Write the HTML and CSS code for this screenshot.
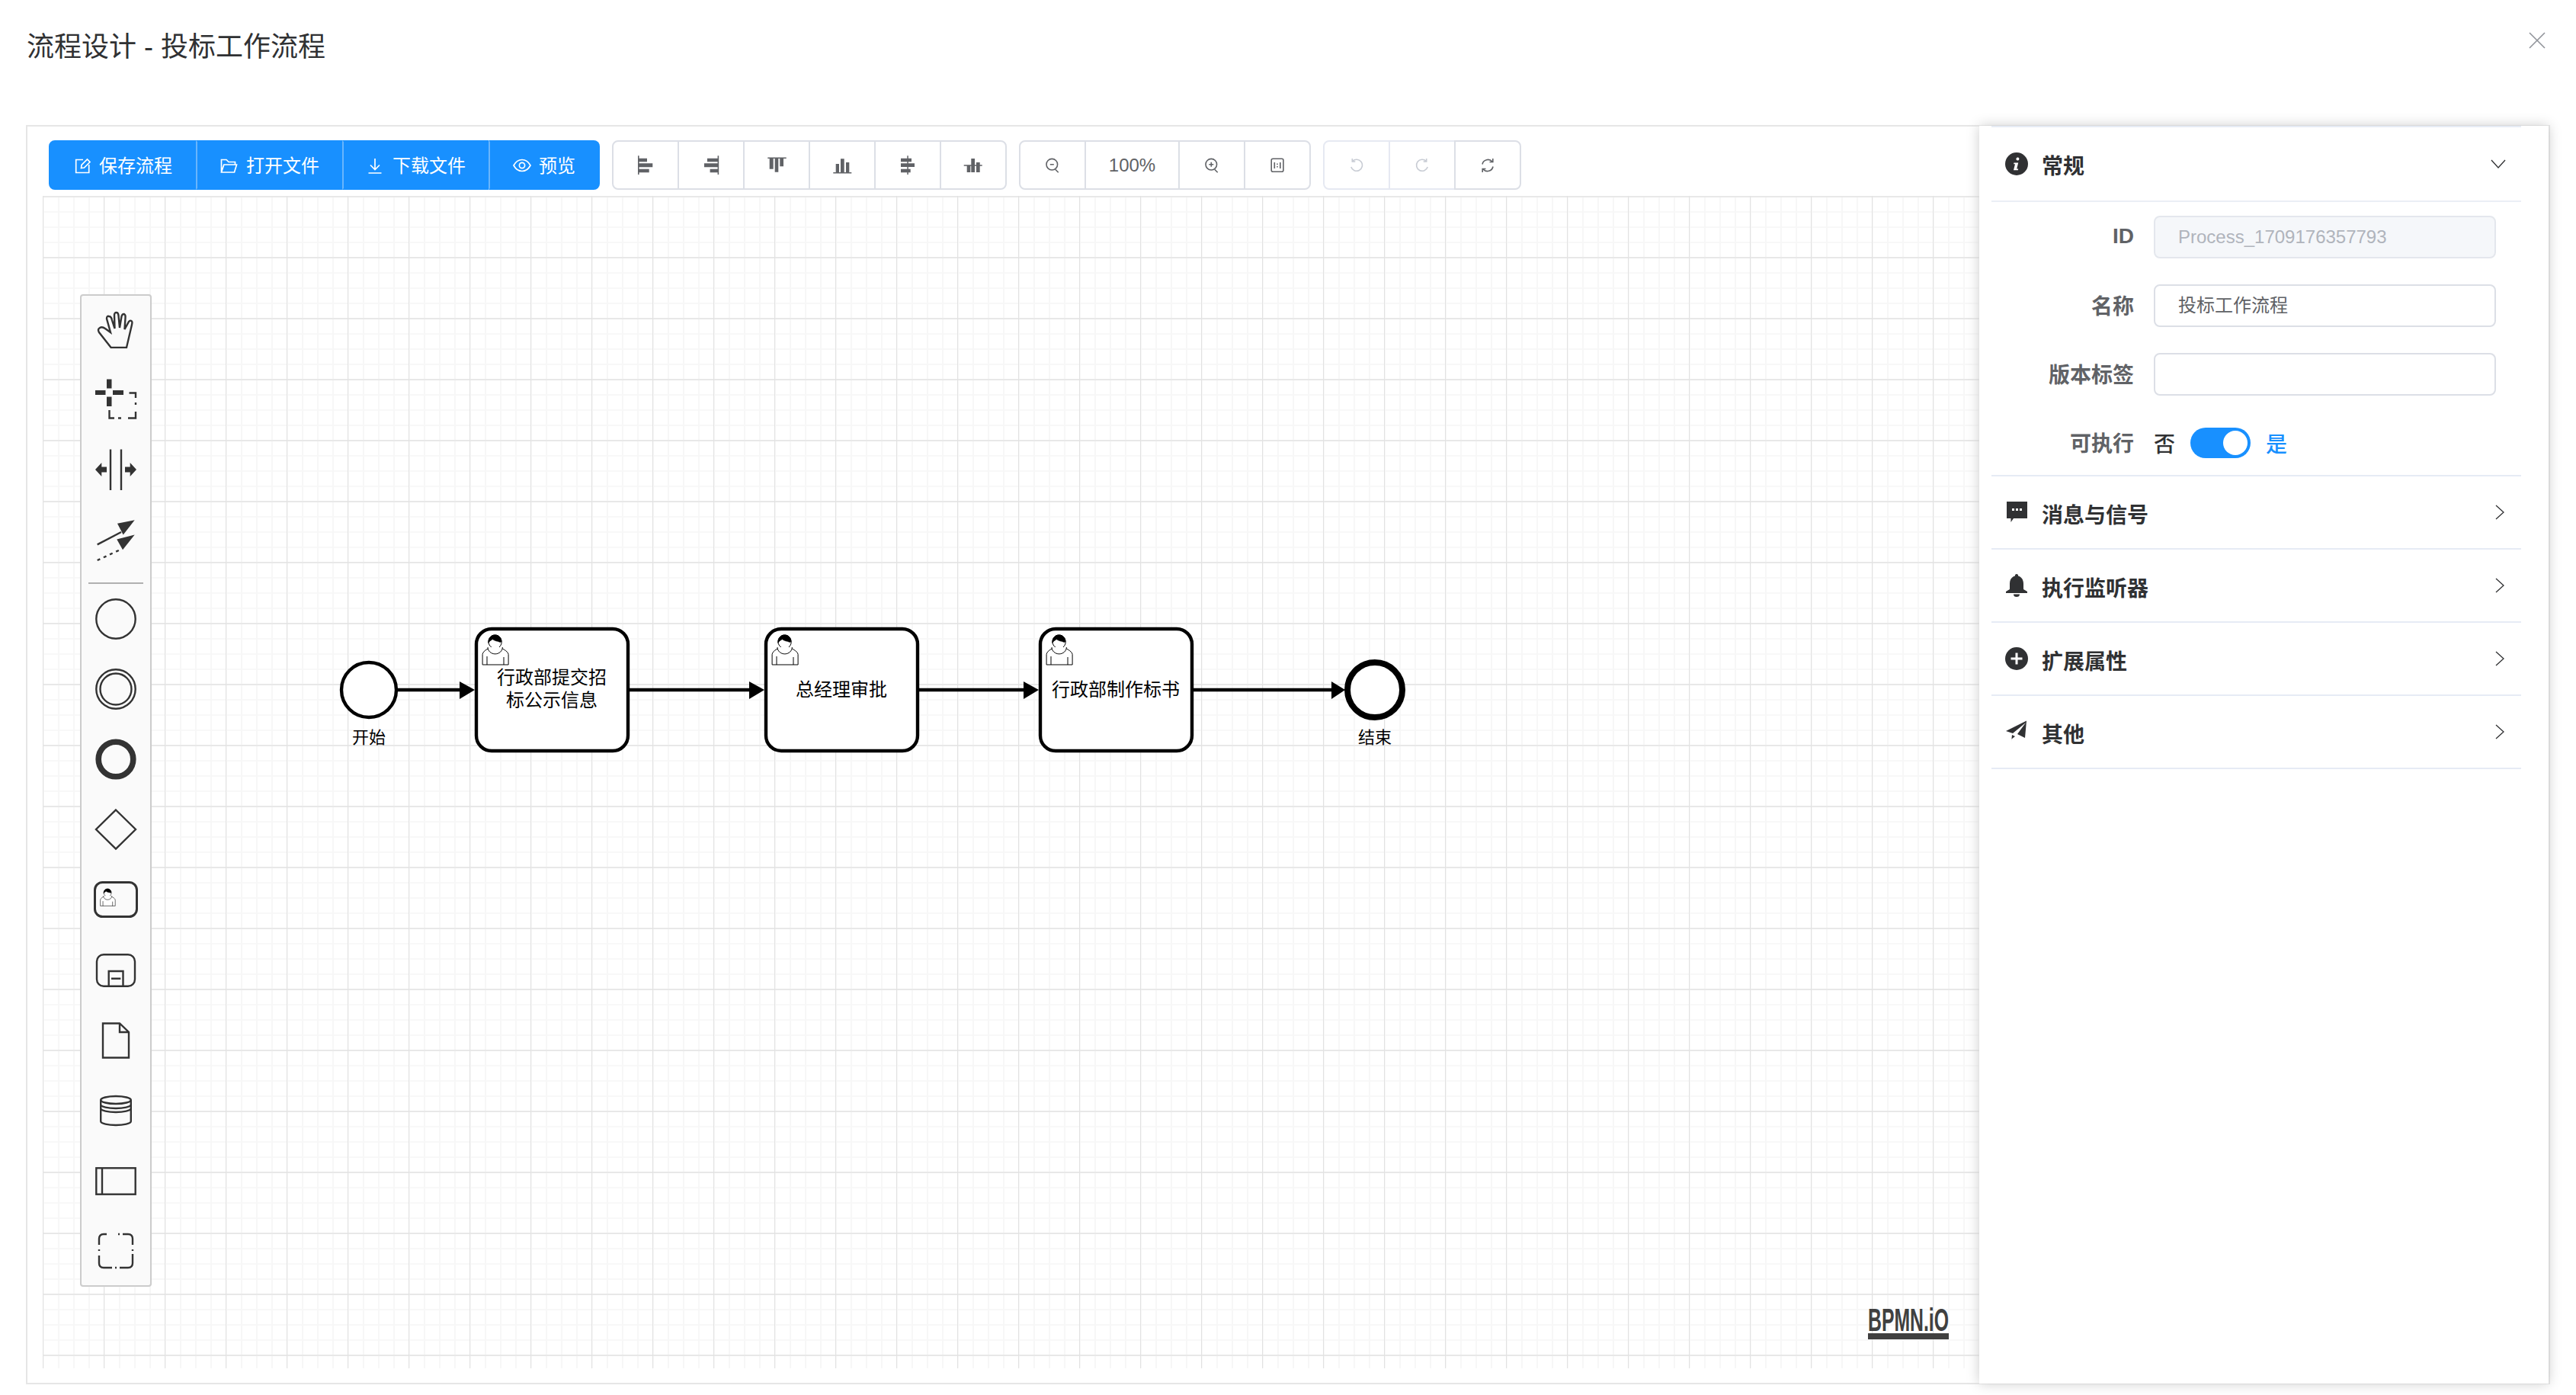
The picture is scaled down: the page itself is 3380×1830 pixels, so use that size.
FILE: index.html
```html
<!DOCTYPE html>
<html lang="zh-CN">
<head>
  <meta charset="UTF-8">
  <title>流程设计 - 投标工作流程</title>
  <meta name="viewport" content="width=device-width, initial-scale=1.0">
  <link rel="stylesheet" href="styles.css">
</head>
<body>
  <svg class="defs" width="0" height="0">
    <defs>
      <symbol id="user" viewBox="0 0 25 28" overflow="visible">
        <path class="user-body" d="m15 12 c0.909,-0.845 1.594,-2.049 1.594,-3.385 0,-2.554 -1.805,-4.622 -4.357,-4.622 -2.552,0 -4.288,2.068 -4.288,4.622 0,1.348 0.974,2.562 1.896,3.405 -0.529,0.187 -5.669,2.097 -5.794,4.756 v6.718 h17 v-6.718 c0,-2.298 -5.528,-4.595 -6.051,-4.776 z m-8 6 l0,5.5 m11,0 l0,-5"/>
        <path class="user-body" d="m15 12 m2.162,1.009 c0,2.447 -2.158,4.431 -4.821,4.431 -2.665,0 -4.822,-1.981 -4.822,-4.431" transform="translate(0 -1)"/>
        <path class="user-hair" d="m15 12 m-0.7,-3.8 c0,0 -2.4,-0.4 -3.6,-1.4 -1,0.6 -2.6,1.6 -2.7,2.4 -0.3,-2.5 1.2,-5.2 4.3,-5.2 2.6,0 4.2,2 4.1,4.4 -0.1,0.5 -1.1,0.2 -2.1,-0.2 z"/>
      </symbol>
    </defs>
  </svg>

  <header class="dialog-head">
    <span class="dialog-title">流程设计 - 投标工作流程</span>
    <svg class="dialog-close" viewBox="0 0 22 22"><path d="M1 1L21 21M21 1L1 21"/></svg>
  </header>

  <main class="designer">
    <div class="toolbar">
      <div class="btn-group group-primary">
        <button class="tb-btn primary">
          <svg class="ico" viewBox="0 0 24 24"><path d="M13 4.5H3.7V21.5H20.7V11M10.5 15.5L11 11.5L18.5 4L22 7.5L14.5 15Z"/></svg>保存流程
        </button>
        <button class="tb-btn primary">
          <svg class="ico" viewBox="0 0 24 24"><path d="M1.5 21V4.5H8L11 7.5H19.5V11M1.5 21H18.5L21.5 11H4.8Z"/></svg>打开文件
        </button>
        <button class="tb-btn primary">
          <svg class="ico" viewBox="0 0 24 24"><path d="M11 3V17M5 11.5L11 17.5L17 11.5M2.5 22H19.5"/></svg>下载文件
        </button>
        <button class="tb-btn primary">
          <svg class="ico" viewBox="0 0 24 24"><path d="M1 12C4 6.5 8 4.5 12 4.5S20 6.5 23 12C20 17.5 16 19.5 12 19.5S4 17.5 1 12Z"/><circle cx="12" cy="12" r="3.6"/></svg>预览
        </button>
      </div>

      <div class="btn-group">
        <button class="tb-btn square"><svg class="ico-s" viewBox="0 0 32 32"><path class="solid" d="M6 3.3h1.6V28H6zM7.6 6.7H18v4.6H7.6zM7.6 13.3H25.3v5H7.6zM7.6 20.7H20.7v4.6H7.6z"/></svg></button>
        <button class="tb-btn square"><svg class="ico-s" viewBox="0 0 32 32"><path class="solid" d="M24.6 3.3h1.6V28h-1.6zM11 6.7H24.6v4.6H11zM7 13.3H24.6v5H7zM14.6 20.7H24.6v4.6H14.6z"/></svg></button>
        <button class="tb-btn square"><svg class="ico-s" viewBox="0 0 32 32"><path class="solid" d="M4.3 5.4H28.7V7H4.3zM6.7 7h5v13.7h-5zM13.7 7h4.6v17.7h-4.6zM20.3 7H25v10.3h-4.7z"/></svg></button>
        <button class="tb-btn square"><svg class="ico-s" viewBox="0 0 32 32"><path class="solid" d="M4.3 25H28.3v1.6H4.3zM7.7 14H12V25H7.7zM14 7.3h4.7V25H14zM21 12h4.3V25H21z"/></svg></button>
        <button class="tb-btn square"><svg class="ico-s" viewBox="0 0 32 32"><path class="solid" d="M15.3 3.3h1.5V28h-1.5zM7 6.7H21v4.6H7zM7 13.3H25v4.7H7zM7 20.7H19.7v4.6H7z"/></svg></button>
        <button class="tb-btn square"><svg class="ico-s" viewBox="0 0 32 32"><path class="solid" d="M3.7 15.3H27.7v1.5H3.7zM7.7 16.8h4.6V25H7.7zM13.3 7H18V25H13.3zM20 12h4.7V25H20z"/></svg></button>
      </div>

      <div class="btn-group">
        <button class="tb-btn square"><svg class="ico-s" viewBox="0 0 32 32"><circle cx="15.3" cy="14.7" r="7.3"/><path d="M19.7 21.3L23.7 25.3M12.8 14.7H17.8"/></svg></button>
        <button class="tb-btn zoom-val">100%</button>
        <button class="tb-btn square"><svg class="ico-s" viewBox="0 0 32 32"><circle cx="15.3" cy="14.7" r="7.3"/><path d="M19.7 21.3L23.7 25.3M12.3 14.7H18.3M15.3 11.7V17.7"/></svg></button>
        <button class="tb-btn square"><svg class="ico-s" viewBox="0 0 32 32"><rect x="8.2" y="7.3" width="15.7" height="17" rx="2"/><path d="M12.3 12V20M19.8 12V20M16 13.5V15M16 17V18.5"/></svg></button>
      </div>

      <div class="btn-group group-history">
        <button class="tb-btn square off"><svg class="ico-s" viewBox="0 0 32 32"><path d="M10.6 10.5A7.5 7.5 0 1 1 8.8 18M10.3 7V11H14.3"/></svg></button>
        <button class="tb-btn square off"><svg class="ico-s" viewBox="0 0 32 32"><path d="M21.4 10.5A7.5 7.5 0 1 0 23.2 18M21.7 7V11H17.7"/></svg></button>
        <button class="tb-btn square"><svg class="ico-s" viewBox="0 0 32 32"><path d="M9 14.5A7.5 7.5 0 0 1 22 11M22.8 7V11.5H18.5M23 17.5A7.5 7.5 0 0 1 10 21M9.2 25V20.5H13.5"/></svg></button>
      </div>
    </div>

    <section class="canvas">
      <!-- diagram coordinates are page coordinates, shifted by the canvas origin -->
      <svg class="diagram" viewBox="56 257 2600 1538" width="2600" height="1538">
        <g class="flow">
          <path d="M521 905H606M826 905H986M1206 905H1346M1566 905H1750"/>
        </g>
        <g class="arrow">
          <path d="M603 894L623 905L603 917Z"/>
          <path d="M983 894L1003 905L983 917Z"/>
          <path d="M1343 894L1363 905L1343 917Z"/>
          <path d="M1747 894L1765 905L1747 917Z"/>
        </g>

        <circle class="node" cx="484" cy="905" r="36"/>
        <circle class="node end" cx="1804" cy="905" r="36"/>
        <rect class="node" x="625" y="825" width="199" height="160" rx="20"/>
        <rect class="node" x="1005" y="825" width="199" height="160" rx="20"/>
        <rect class="node" x="1365" y="825" width="199" height="160" rx="20"/>
        <use href="#user" x="625" y="825" width="50" height="56"/>
        <use href="#user" x="1005" y="825" width="50" height="56"/>
        <use href="#user" x="1365" y="825" width="50" height="56"/>

        <text class="task-label" x="724" y="888">行政部提交招</text>
        <text class="task-label" x="724" y="918">标公示信息</text>
        <text class="task-label" x="1104" y="904">总经理审批</text>
        <text class="task-label" x="1464" y="904">行政部制作标书</text>
        <text class="event-label" x="484" y="967">开始</text>
        <text class="event-label" x="1804" y="967">结束</text>

        <text class="logo-text" x="2451" y="1746" textLength="106" lengthAdjust="spacingAndGlyphs">BPMN.iO</text>
        <rect class="logo-bar" x="2451" y="1749" width="106" height="8"/>
      </svg>

      <nav class="palette">
        <div class="entry"><svg viewBox="0 0 60 60"><path d="M23.7 54.9L8 35Q5.5 31 9 29Q12 27 16 30L23 35L18 17Q18 13 21 14Q24 14 25 19L28.5 30L28 12Q28.5 8.5 31 9Q33 9 33.5 13L35 29L37.5 14Q38.5 10.5 41 11Q43 12 42.5 16L41.5 31L47 21Q49 18.5 51 20.5Q52 22 51 25L44 54.9Z"/></svg></div>
        <div class="entry"><svg viewBox="0 0 60 60"><path class="fill" d="M3 19H16.5V25H3zM26 19H40V25H26zM18 4.6H24.5V16.5H18zM18 27.5H24.5V40H18z"/><path d="M47.5 22.5H56V29M56 35v3M56 47v8.5H46M37 55.5h-4M28 55.5H21.5V45"/></svg></div>
        <div class="entry"><svg viewBox="0 0 60 60"><path d="M23 4.4V58M37 4.4V58"/><path class="fill" d="M3 31L11.3 22V27.5H18V34.5H11.3V40ZM57 31L48.7 22V27.5H42V34.5H48.7V40Z"/></svg></div>
        <div class="entry"><svg viewBox="0 0 60 60"><path d="M5.7 37.4L37 21"/><path class="fill" d="M54.7 5.2L32 9.8L39.7 24.5Z"/><path class="dash" d="M5.7 58L36 44"/><path class="fill" d="M54.7 24.5L31.3 30.5L39 44.2Z"/></svg></div>
        <hr class="separator">
        <div class="entry"><svg viewBox="0 0 60 60"><circle cx="30" cy="30" r="25.7"/></svg></div>
        <div class="entry"><svg viewBox="0 0 60 60"><circle cx="30" cy="30" r="25.7"/><circle cx="30" cy="30" r="20.5"/></svg></div>
        <div class="entry"><svg viewBox="0 0 60 60"><circle class="thick" cx="30" cy="30" r="22.8"/></svg></div>
        <div class="entry"><svg viewBox="0 0 60 60"><path d="M30 4.5L56 30L30 55.5L4 30Z"/></svg></div>
        <div class="entry">
          <svg viewBox="0 0 60 60">
            <rect class="med" x="2.5" y="7.5" width="55" height="45" rx="10"/>
            <use href="#user" x="5" y="11.4" width="28.75" height="32.2"/>
          </svg>
        </div>
        <div class="entry"><svg viewBox="0 0 60 60"><rect x="5" y="10.3" width="50" height="41.4" rx="9"/><path d="M20.7 51.7V32H39.5V51.7M24 41.7H36.3"/></svg></div>
        <div class="entry"><svg viewBox="0 0 60 60"><path d="M13 8.5H35L47 20V53.5H13ZM35 8.5V20H47"/></svg></div>
        <div class="entry"><svg viewBox="0 0 60 60"><ellipse cx="30" cy="17" rx="19.8" ry="5"/><path d="M10.2 17V45C10.2 48 20 50 30 50S49.8 48 49.8 45V17M10.2 23C10.2 26 20 28 30 28S49.8 26 49.8 23M10.2 28C10.2 31 20 33 30 33S49.8 31 49.8 28"/></svg></div>
        <div class="entry"><svg viewBox="0 0 60 60"><rect x="4.3" y="14.3" width="51.4" height="34.4"/><path d="M12 14.3V48.7"/></svg></div>
        <div class="entry"><svg viewBox="0 0 60 60"><path d="M18 9H14Q8 9 8 15V23M8 29V31M8 37V47Q8 53 14 53H25M29 53H31M35 53H46Q52 53 52 47V35M52 29V31M52 23V15Q52 9 46 9H39M33 9H35"/></svg></div>
      </nav>
    </section>

    <aside class="panel">
      <div class="collapse">
        <div class="item">
          <div class="item-head open">
            <svg class="item-ico" viewBox="0 0 30 30"><circle cx="15" cy="15" r="15"/><path class="knock" d="M16 6.5a2 2 0 1 1 -.1 3.9a2 2 0 0 1 .1 -3.9zM11.5 13.5h5.7l-2 8h2l-.4 1.8h-5.8l2 -8h-1.9z"/></svg>
            <span class="item-title">常规</span>
            <svg class="chev" viewBox="0 0 20 12"><path d="M1 1L10 11L19 1"/></svg>
          </div>
          <div class="item-body">
            <div class="form-row">
              <label class="form-label latin">ID</label>
              <div class="input disabled">Process_1709176357793</div>
            </div>
            <div class="form-row">
              <label class="form-label">名称</label>
              <div class="input">投标工作流程</div>
            </div>
            <div class="form-row">
              <label class="form-label">版本标签</label>
              <div class="input"></div>
            </div>
            <div class="form-row switch-row">
              <label class="form-label">可执行</label>
              <span class="switch-text">否</span>
              <span class="switch"><span class="switch-knob"></span></span>
              <span class="switch-text on">是</span>
            </div>
          </div>
        </div>

        <div class="item">
          <div class="item-head">
            <svg class="item-ico" viewBox="0 0 30 30"><path d="M2 1H29V23H11L7.5 28V23H2Z"/><path class="knock" d="M9 10h3v3H9zM14 10h3v3h-3zM19 10h3v3h-3z"/></svg>
            <span class="item-title">消息与信号</span>
            <svg class="chev" viewBox="0 0 12 20"><path d="M1 1L11 10L1 19"/></svg>
          </div>
        </div>
        <div class="item">
          <div class="item-head">
            <svg class="item-ico" viewBox="0 0 30 30"><path d="M15 0a2 2 0 0 1 2 2.5C22 4 24 8 24 13V20L29 23V25H1V23L6 20V13C6 8 8 4 13 2.5A2 2 0 0 1 15 0ZM11 26.5H19A4 3.5 0 0 1 11 26.5Z"/></svg>
            <span class="item-title">执行监听器</span>
            <svg class="chev" viewBox="0 0 12 20"><path d="M1 1L11 10L1 19"/></svg>
          </div>
        </div>
        <div class="item">
          <div class="item-head">
            <svg class="item-ico" viewBox="0 0 30 30"><circle cx="15" cy="15" r="15"/><path class="knock" d="M13.5 7.5h3v6h6v3h-6v6h-3v-6h-6v-3h6z"/></svg>
            <span class="item-title">扩展属性</span>
            <svg class="chev" viewBox="0 0 12 20"><path d="M1 1L11 10L1 19"/></svg>
          </div>
        </div>
        <div class="item">
          <div class="item-head">
            <svg class="item-ico" viewBox="0 0 30 30"><path d="M28 0.5L26 23L16 18L27 3L10 17L1 14ZM9 19L13 21L8.5 24.5L8 28.5Z"/></svg>
            <span class="item-title">其他</span>
            <svg class="chev" viewBox="0 0 12 20"><path d="M1 1L11 10L1 19"/></svg>
          </div>
        </div>
      </div>
    </aside>
  </main>
</body>
</html>
```

FILE: styles.css
```css
* {
  box-sizing: border-box;
}

body {
  margin: 0;
  height: 1830px;
  overflow: hidden;
  background-color: #fff;
  color: #303133;
  font-family: "Liberation Sans", "Noto Sans CJK SC", sans-serif;
}

.defs {
  position: absolute;
}

/* dialog header */
.dialog-head {
  height: 164px;
  padding: 42px 35px 0;
}

.dialog-title {
  display: block;
  font-size: 36px;
  line-height: 40px;
  color: #303133;
}

.dialog-close {
  position: absolute;
  top: 42px;
  right: 40px;
  width: 22px;
  height: 22px;
  fill: none;
  stroke: #909399;
  stroke-width: 1.6;
}

.designer {
  position: relative;
  height: 1652px;
  margin: 0 34px;
  padding-top: 18px;
  border: 2px solid #e6e6e6;
}

/* toolbar */
.toolbar {
  display: flex;
  gap: 16px;
  height: 65px;
  padding-left: 28px;
}

.btn-group {
  display: flex;
}

.tb-btn {
  display: flex;
  align-items: center;
  justify-content: center;
  height: 65px;
  margin: 0;
  margin-left: -2px;
  padding: 0;
  border: 2px solid #dcdfe6;
  background-color: #fff;
  color: #606266;
  font-family: inherit;
  font-size: 24px;
  white-space: nowrap;
}

.tb-btn:first-child {
  margin-left: 0;
  border-radius: 8px 0 0 8px;
}

.tb-btn:last-child {
  border-radius: 0 8px 8px 0;
}

.tb-btn.primary {
  justify-content: flex-start;
  gap: 10px;
  padding: 0 0 3px 30px;
  border-color: #1890ff;
  border-left-color: #69b5fc;
  background-color: #1890ff;
  color: #fff;
}

.tb-btn.primary:first-child {
  border-left-color: #1890ff;
}

.group-primary .tb-btn {
  margin-left: 0;
  width: 192px;
}

.group-primary .tb-btn:first-child {
  width: 193px;
}

.group-primary .tb-btn:last-child {
  width: 146px;
}

.square {
  width: 88px;
}

.zoom-val {
  width: 125px;
}

.tb-btn.off {
  border-color: #e6e9f2;
}

.ico {
  flex: none;
  width: 24px;
  height: 24px;
  margin-top: 3px;
  fill: none;
  stroke: #fff;
  stroke-width: 1.7;
}

.ico-s {
  width: 32px;
  height: 32px;
  fill: none;
  stroke: #606266;
  stroke-width: 1.6;
}

.ico-s .solid {
  fill: #606266;
  stroke: none;
}

.off .ico-s {
  stroke: #c8ccd4;
}

/* canvas with the diagram grid */
.canvas {
  position: relative;
  height: 1538px;
  margin-top: 8px;
  margin-left: 20px;
  overflow: hidden;
  background-color: #fff;
  background-image:
    linear-gradient(90deg, #e2e2e2 1px, transparent 1px),
    linear-gradient(#e8e8e8 2px, transparent 2px),
    linear-gradient(90deg, #f7f7f7 2px, transparent 2px),
    linear-gradient(#f8f8f8 2px, transparent 2px);
  background-size: 80px 80px, 80px 80px, 20px 20px, 20px 20px;
}

.diagram {
  position: absolute;
  top: 0;
  left: 0;
}

.flow path {
  fill: none;
  stroke: #000;
  stroke-width: 4.4;
}

.arrow path {
  fill: #000;
}

.node {
  fill: #fff;
  stroke: #000;
  stroke-width: 4.4;
}

.node.end {
  stroke-width: 8;
}

.user-body {
  fill: #fff;
  stroke: #000;
  stroke-width: 0.5;
}

.user-hair {
  fill: #000;
  stroke: #000;
  stroke-width: 0.4;
}

.task-label,
.event-label {
  fill: #000;
  text-anchor: middle;
  dominant-baseline: central;
}

.task-label {
  font-size: 24px;
}

.event-label {
  font-size: 22px;
}

.logo-text {
  font-size: 42px;
  font-weight: 700;
  fill: #404040;
}

.logo-bar {
  fill: #404040;
}

/* element palette */
.palette {
  position: absolute;
  top: 129px;
  left: 49px;
  width: 94px;
  height: 1302px;
  border: 2px solid #ccc;
  border-radius: 4px;
  background-color: #fafafa;
}

.entry {
  display: flex;
  align-items: center;
  justify-content: center;
  height: 92px;
}

.entry:first-child {
  margin-top: -3px;
}

.entry svg {
  width: 60px;
  height: 60px;
  fill: none;
  stroke: #333;
  stroke-width: 2.4;
  overflow: visible;
}

.entry .fill {
  fill: #333;
  stroke: none;
}

.entry .dash {
  stroke-dasharray: 4 5;
}

.entry .thick {
  stroke-width: 7.6;
}

.entry .med {
  stroke-width: 3;
}

.separator {
  width: 72px;
  height: 2px;
  margin: 11px auto 0;
  border: 0;
  background-color: #b0b0b0;
}

/* properties panel */
.panel {
  position: absolute;
  top: -1px;
  right: 0;
  bottom: -1px;
  width: 747px;
  padding: 0 36px 0 16px;
  background-color: #fff;
  box-shadow: 0 0 16px #ccc;
}

.collapse {
  border-top: 2px solid #e6ebf5;
}

.item {
  border-bottom: 2px solid #e6ebf5;
}

.item-head {
  display: flex;
  align-items: center;
  height: 94px;
  padding-left: 18px;
}

.item-head.open {
  height: 96px;
  border-bottom: 2px solid #ebeef5;
  box-sizing: content-box;
}

.item-ico {
  flex: none;
  width: 30px;
  height: 30px;
  fill: #303133;
}

.item-ico .knock {
  fill: #fff;
}

.item-title {
  flex: 1;
  margin-left: 18px;
  padding-top: 4px;
  font-size: 28px;
  font-weight: 600;
  color: #303133;
}

.open .item-title {
  padding-top: 2px;
}

.chev {
  flex: none;
  fill: none;
  stroke: #303133;
  stroke-width: 1.3;
}

.open .chev {
  width: 20px;
  height: 12px;
  margin-right: 20px;
}

.item-head:not(.open) .chev {
  width: 12px;
  height: 20px;
  margin-right: 22px;
}

.item-body {
  padding: 18px 0 14px;
}

.form-row {
  display: flex;
  align-items: center;
  height: 56px;
  margin-bottom: 34px;
}

.switch-row {
  margin-bottom: 0;
}

.form-label {
  flex: none;
  width: 187px;
  margin-right: 26px;
  margin-top: -2px;
  text-align: right;
  font-size: 28px;
  font-weight: 600;
  color: #606266;
}

.input {
  width: 449px;
  height: 56px;
  padding: 0 30px;
  border: 2px solid #dcdfe6;
  border-radius: 8px;
  font-size: 24px;
  line-height: 52px;
  color: #606266;
}

.input.disabled {
  border-color: #e4e7ed;
  background-color: #f5f7fa;
  color: #b0b4bc;
}

.switch-text {
  font-size: 28px;
  font-weight: 500;
  color: #303133;
}

.switch-text.on {
  color: #1890ff;
}

.switch {
  display: flex;
  align-items: center;
  justify-content: flex-end;
  width: 79px;
  height: 40px;
  margin: 0 20px;
  padding-right: 4px;
  border-radius: 20px;
  background-color: #1890ff;
}

.switch-knob {
  width: 32px;
  height: 32px;
  border-radius: 50%;
  background-color: #fff;
}
```
